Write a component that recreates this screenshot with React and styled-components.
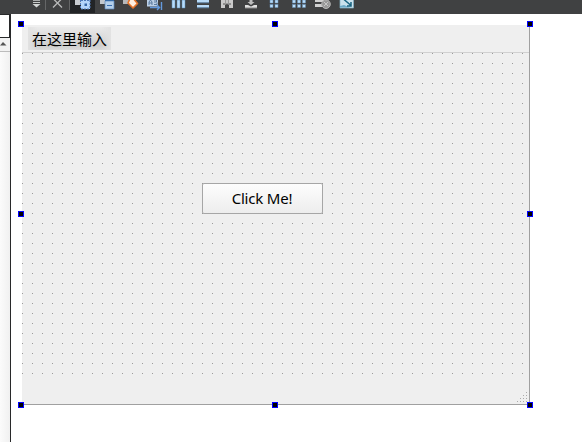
import React from "react";
import styled, { createGlobalStyle } from "styled-components";

const Global = createGlobalStyle`
  html, body { margin: 0; background: #fff; overflow: hidden; }
  * { box-sizing: border-box; }
`;

const Window = styled.div`
  display: flex;
  flex-direction: column;
  width: 582px;
  height: 442px;
  background: #fff;
  color: #000;
  overflow: hidden;
`;

const Toolbar = styled.header`
  display: flex;
  flex: none;
  height: 14px;
  padding-left: 31px;
  background: #404142;
`;

const Tool = styled.div`
  display: flex;
  justify-content: center;
  width: ${(p) => p.$width || 24}px;
  height: 14px;
  background: ${(p) => (p.$active ? "linear-gradient(#222426 13px, #404142 13px)" : "transparent")};
  svg { display: block; flex: none; }
`;

const Separator = styled.div`
  width: 1px;
  height: 10px;
  background: #656667;
`;

const Workspace = styled.div`
  display: flex;
  flex: 1;
  min-height: 0;
`;

const SidePanel = styled.aside`
  display: flex;
  flex-direction: column;
  flex: none;
  width: 11px;
  border-right: 1px solid #28292a;
  background: linear-gradient(90deg, #fbfbfb, #f0f0f0);
`;

const Filter = styled.div`
  height: 24px;
  width: 10px;
  border: solid #28292a;
  border-width: 1px 1px 1px 0;
  background: #fff;
`;

const ScrollHead = styled.div`
  display: flex;
  height: 14px;
  border-bottom: 1px solid #bcbcbc;
  background: #f2f2f2;
`;

const Canvas = styled.main`
  flex: 1;
  padding: 11px 0 0 11px;
`;

const Form = styled.section`
  position: relative;
  display: flex;
  flex-direction: column;
  width: 508px;
  height: 380px;
  border: solid #a0a0a0;
  border-width: 0 1px 1px 0;
  background: #efefef;
`;

const MenuBar = styled.nav`
  height: 28px;
  padding: 2px 0 0 6px;
  border-bottom: 1px solid #d0d0d0;
`;

const MenuItem = styled.div`
  width: 83px;
  height: 23px;
  padding-left: 4px;
  background:
    linear-gradient(90deg, #e2e2e2, #e2e2e200 12% 88%, #e2e2e2),
    linear-gradient(#ebebeb, #cdcdcd 80%, #dadada);
  font: 15px/23px "Noto Sans CJK SC", sans-serif;
  white-space: nowrap;
`;

const Grid = styled.div`
  display: flex;
  justify-content: center;
  height: 321px;
  padding: 130px 27px 0 0;
  background: conic-gradient(from 270deg at 1px 1px, #9b9b9b 90deg, transparent 0) 0 0 / 10px 10px;
`;

const PushButton = styled.button`
  width: 121px;
  height: 31px;
  padding: 0;
  border: 1px solid #a6a6a6;
  border-radius: 2px;
  background: linear-gradient(#fdfdfd, #ededed);
  color: #000;
  font: 15px/29px "Noto Sans", sans-serif;
  letter-spacing: -0.2px;
`;

const StatusBar = styled.footer`
  display: flex;
  flex: 1;
  align-items: flex-end;
  justify-content: flex-end;
  padding: 0 2px 2px 0;
  svg { display: block; }
`;

const Handle = styled.i`
  position: absolute;
  left: ${(p) => p.$x}px;
  top: ${(p) => p.$y}px;
  width: 6px;
  height: 6px;
  border: 1px solid #00f;
  background: #000;
`;

const Icon = ({ children, width = 24 }) => (
  <svg width={width} height="14" viewBox={`0 0 ${width} 14`}>{children}</svg>
);

const handles = [-4, 250, 505].flatMap((x) =>
  [-4, 186, 377].map((y) => [x, y])
).filter(([x, y]) => !(x === 250 && y === 186));

const gripDots = [[9, 0], [6, 3], [9, 3], [3, 6], [6, 6], [9, 6], [0, 9], [3, 9], [6, 9], [9, 9]];

export default function App() {
  return (
    <>
      <Global />
      <Window>
        <Toolbar>
          <Tool $width={14}>
            <Icon width={14}><path d="M2 .5h7" stroke="#aaacab" /><path d="M2 2.5h7" stroke="#c9cbca" /><path d="M1.5 4h8l-4 3.5z" fill="#d4d6d5" /></Icon>
          </Tool>
          <Separator />
          <Tool $width={23}>
            <Icon width={23}><path d="M7-1.5l9 9M16-1.5l-9 9" stroke="#b9baba" strokeWidth="1.3" /></Icon>
          </Tool>
          <Separator />
          <Tool $width={25} $active>
            <Icon width={25}>
              <path d="M5 0h7v5H5z" fill="#c8ccd1" />
              <rect x="11" y="0" width="9" height="9" fill="#b3d4fa" />
              <path d="M10.5 0v9M20 0v9M11 .5h9M11 9h9" stroke="#4f79b8" strokeDasharray="2 1" />
              <rect x="14.5" y="3.5" width="2.5" height="2.5" fill="#3565a7" />
            </Icon>
          </Tool>
          <Tool>
            <Icon>
              <path d="M5 0h7v4H5z" fill="#c1c7cd" />
              <path d="M10 1h9v8h-9z" fill="#b4cfea" stroke="#5b87bb" strokeWidth=".7" />
              <path d="M12 5.5h5" stroke="#376daf" />
              <path d="M10 .5h9" stroke="#356aa6" />
            </Icon>
          </Tool>
          <Tool>
            <Icon>
              <path d="M4 0h7v4H4z" fill="#b6b8ba" />
              <path d="M11-1.5l2.5-1 5 6-4.5 4.5-5-5z" fill="#ffeee0" stroke="#e47228" strokeWidth="1.6" strokeLinejoin="round" />
            </Icon>
          </Tool>
          <Tool>
            <Icon>
              <path d="M4 0h11v6.5H4z" fill="#bcd0e6" />
              <path d="M6 5V2l1.5-2L9 2v3M6 3h3M11 0h2.5v2H11M14 2.5v2h-3" stroke="#456891" fill="none" strokeWidth=".8" />
              <path d="M7 7.5h9M14 5l2.5 2.5L14 10M18.5 2v8" stroke="#649add" fill="none" strokeWidth="1.4" />
            </Icon>
          </Tool>
          <Tool>
            <Icon>
              {[5, 10, 15].map((x) => <path key={x} d={`M${x} 0h3v8h-3z`} fill="#b7dcfa" stroke="#5b8cb8" strokeWidth=".5" />)}
            </Icon>
          </Tool>
          <Tool>
            <Icon>
              <path d="M6 0h12v2.5H6zM6 5h12v2.5H6z" fill="#b7daf7" />
              <path d="M6 2.8h12M6 7.8h12" stroke="#608fbd" strokeWidth=".7" />
            </Icon>
          </Tool>
          <Tool>
            <Icon>
              <path d="M6 0h4v8H6zM14 0h4v8h-4z" fill="#c9c9c9" />
              <path d="M10 0h4v5l-2-1-2 1z" fill="#999" />
              <path d="M8 4h2M14 4h2" stroke="#555" />
              <path d="M12 0v3" stroke="#eee" />
            </Icon>
          </Tool>
          <Tool>
            <Icon>
              <path d="M6 5h3l3 1.5L15 5h3v3H6z" fill="#dedede" />
              <path d="M10.5 0h3v2h2L12 5 8.5 2h2z" fill="#bdbdbd" />
              <path d="M6 8h12" stroke="#888" />
            </Icon>
          </Tool>
          <Tool>
            <Icon>
              {[7, 12].map((x) => [0, 4.5].map((y) => <rect key={`${x}${y}`} x={x} y={y} width="3" height="3" fill="#b8dcf8" stroke="#638fba" strokeWidth=".5" />))}
            </Icon>
          </Tool>
          <Tool>
            <Icon>
              {[5.5, 10.5, 15.5].map((x) => [0, 4.5].map((y) => <rect key={`${x}${y}`} x={x} y={y} width="3" height="3" fill="#b8dcf8" stroke="#638fba" strokeWidth=".5" />))}
            </Icon>
          </Tool>
          <Tool>
            <Icon>
              <path d="M4 0h9v2H4zM4 4h9v3H4z" fill="#d0d0d0" />
              <circle cx="15" cy="4.2" r="4.3" fill="#999" stroke="#b7b7b7" />
              <path d="M13 2l4 4M17 2l-4 4" stroke="#c6c6c6" />
            </Icon>
          </Tool>
          <Tool>
            <Icon>
              <path d="M5-1h13.5v9H5z" fill="#c9e1ec" stroke="#83afc2" strokeWidth=".7" />
              <path d="M5 6l4-1 6 2.5H5z" fill="#6ba9c7" />
              <path d="M9-.5l7 6M16 2v4h-4" stroke="#17627f" fill="none" strokeWidth="1.5" />
            </Icon>
          </Tool>
        </Toolbar>
        <Workspace>
          <SidePanel>
            <Filter />
            <ScrollHead>
              <svg width="8" height="13" viewBox="0 0 8 13"><path d="M0 7.5L3 4l3.5 3.5z" fill="#555" /></svg>
            </ScrollHead>
          </SidePanel>
          <Canvas>
            <Form>
              <MenuBar><MenuItem>在这里输入</MenuItem></MenuBar>
              <Grid><PushButton>Click Me!</PushButton></Grid>
              <StatusBar>
                <svg width="10" height="10" viewBox="0 0 10 10">
                  {gripDots.map(([x, y]) => <rect key={`${x}-${y}`} x={x} y={y} width="1" height="1" fill="#aaa" />)}
                </svg>
              </StatusBar>
              {handles.map(([x, y]) => <Handle key={`${x}-${y}`} $x={x} $y={y} />)}
            </Form>
          </Canvas>
        </Workspace>
      </Window>
    </>
  );
}
